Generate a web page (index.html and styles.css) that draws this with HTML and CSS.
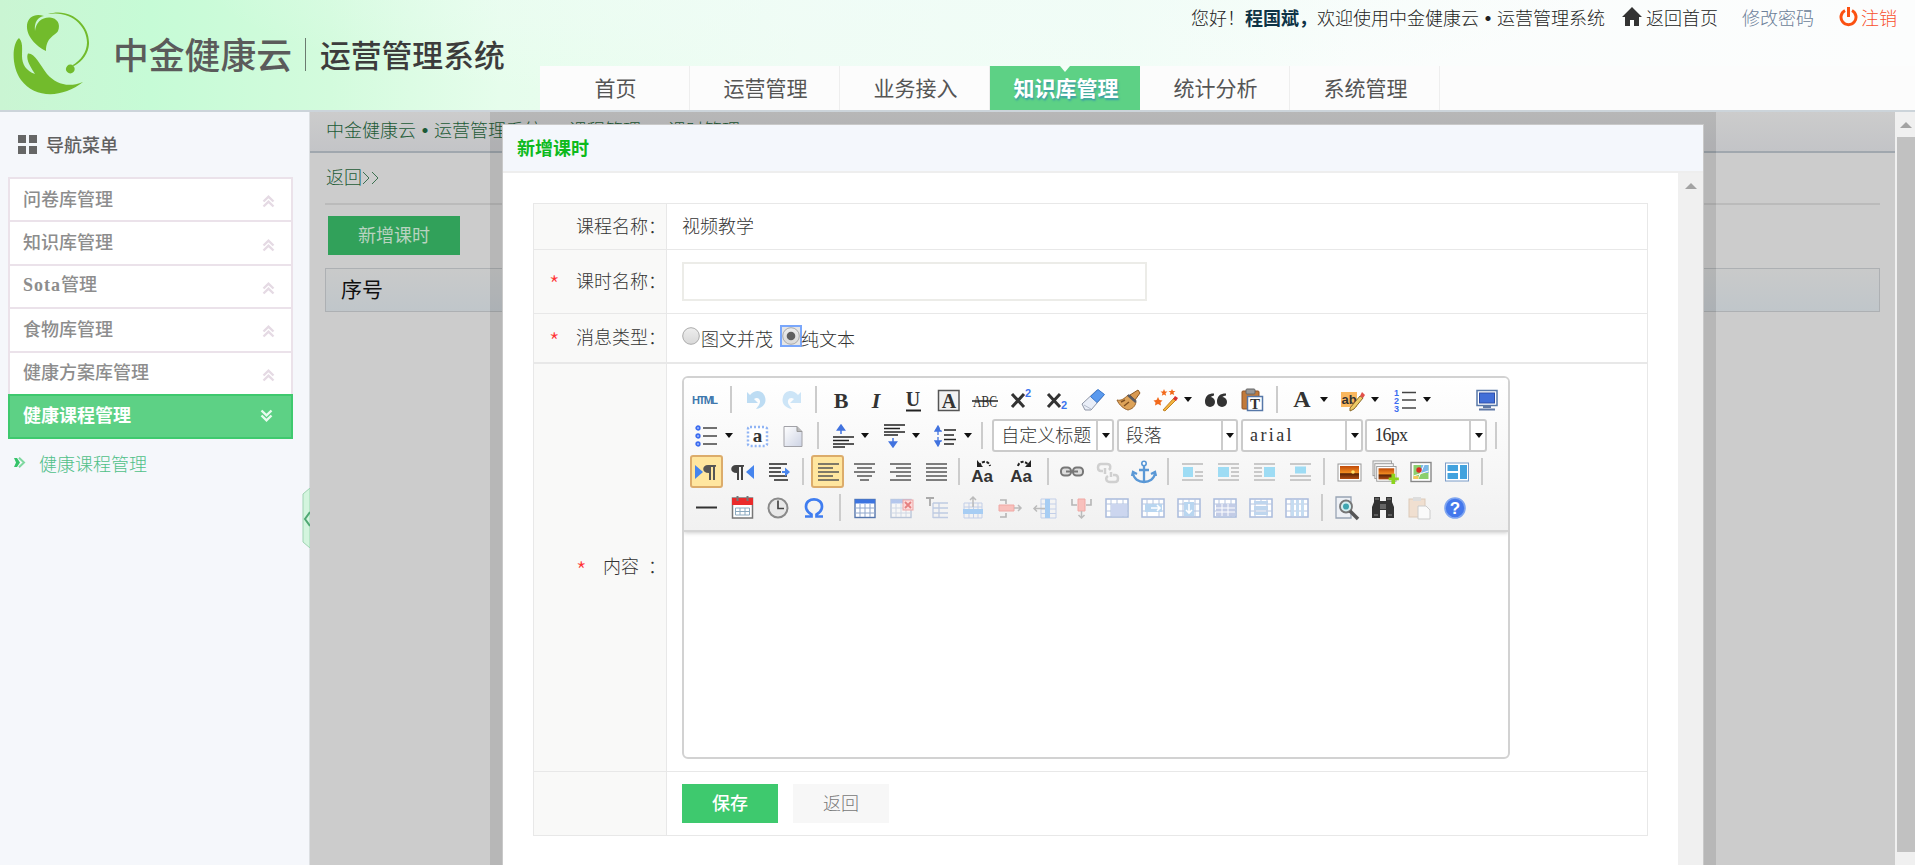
FILE: index.html
```html
<!DOCTYPE html>
<html lang="zh-CN">
<head>
<meta charset="utf-8">
<title>中金健康云•运营管理系统</title>
<link rel="stylesheet" href="styles.css">
</head>
<body>
<svg class="defs" width="0" height="0">
  <defs>
    <linearGradient id="g-paper" x1="0" y1="0" x2="1" y2="1"><stop offset="0" stop-color="#fff"/><stop offset="1" stop-color="#cdd3e4"/></linearGradient>
    <linearGradient id="g-sun" x1="0" y1="0" x2="0" y2="1"><stop offset="0" stop-color="#c04a08"/><stop offset=".5" stop-color="#f08a20"/><stop offset=".6" stop-color="#5a2408"/><stop offset="1" stop-color="#b34c10"/></linearGradient>
    <linearGradient id="g-radio" x1="0" y1="0" x2="0" y2="1"><stop offset="0" stop-color="#eee"/><stop offset="1" stop-color="#d8d8d8"/></linearGradient>
    <symbol id="i-lines" viewBox="0 0 24 24"><path d="M2 4h21M2 8h15M2 12h21M2 16h15M2 20h21" stroke="#555" stroke-width="1.700"/></symbol>
    <symbol id="i-float" viewBox="0 0 24 24"><path d="M2 4h21M2 20h21M15 12h8M15 16h8" stroke="#bbb" stroke-width="1.500"/><rect x="3" y="7" width="10" height="10" fill="#9edcf4"/></symbol>
    <symbol id="i-table" viewBox="0 0 24 24"><rect x="2" y="3.500" width="20" height="18" fill="#fff" stroke="#5576ad" stroke-width="1.400"/><path d="M2 3.500h20v4H2z" fill="#3c74e0"/><path d="M2 12h20M2 17h20M7 8v13M12 8v13M17 8v13" stroke="#8fa6cc"/></symbol>
    <symbol id="i-cells" viewBox="0 0 24 24"><rect x="1" y="3" width="22" height="18" fill="#fff" stroke="#a9bbdc" stroke-width="1.500"/><path d="M1 8h22M1 15h22M6 3v18M18 3v18M12 3v5" stroke="#b4c4e0"/></symbol>
    <symbol id="i-chevrons" viewBox="0 0 12 13"><path d="M1 6.500l5-4.800 5 4.800M1 11.500l5-4.800 5 4.800" fill="none" stroke="currentColor" stroke-width="2.400"/></symbol>
  </defs>
</svg>

<header class="header">
  <div class="brand">
    <svg class="brand-mark" viewBox="12 10 80 90"><g fill="#72bb2c"><path d="M46 51C36 46 26 36 27 25 28 16 36 13 44 16c-6 1-10 6-9 15 1-9 7-14 15-13.500 7 .500 11 6.500 8 13.500-3 5-12 6-12 20z"/><path d="M19 38C12 44 11 66 21 80c14 19 42 18 62 2-15 6-27 2-36-8-7-9-12-21-19-20.500-3 6 4 16 7 20.500-9-3-13-10-13-18 0-8 1-14-3-18z"/><circle cx="70.300" cy="69" r="4.400"/><path d="M48 14C71 7 90 25 89 44c-.500 9-6 17-15 22l-2-.500c9-5 15-14 15-23C87 26 71 10 48 14z"/></g></svg>
    <span class="brand-name">中金健康云</span><span class="brand-line"></span><span class="brand-sub">运营管理系统</span>
  </div>
  <div class="header-right">
    <div class="userbar">
      <span>您好！<b>程国斌，</b>欢迎使用中金健康云<i class="dot">•</i>运营管理系统</span>
      <a class="u-home"><svg width="20" height="20" viewBox="0 0 20 20"><path d="M10 0l10 10h-3v9h-5v-6H8v6H3v-9H0z" fill="#333"/></svg>返回首页</a>
      <a class="u-pass">修改密码</a>
      <a class="u-out"><svg width="19" height="20" viewBox="0 0 19 20"><path d="M6 3.500a7.500 7.500 0 1 0 7 0" fill="none" stroke="#fb5112" stroke-width="3"/><path d="M9.500 0v10" stroke="#fb5112" stroke-width="3"/></svg>注销</a>
    </div>
    <nav class="nav">
      <a>首页</a><a>运营管理</a><a>业务接入</a><a class="on">知识库管理</a><a>统计分析</a><a>系统管理</a>
    </nav>
  </div>
</header>

<div class="body">
  <aside class="side">
    <h2 class="side-title"><span class="grid4"><i></i><i></i><i></i><i></i></span>导航菜单</h2>
    <ul class="menu">
      <li>问卷库管理<svg><use href="#i-chevrons"/></svg></li>
      <li>知识库管理<svg><use href="#i-chevrons"/></svg></li>
      <li><span><span class="latin">Sota</span>管理</span><svg><use href="#i-chevrons"/></svg></li>
      <li>食物库管理<svg><use href="#i-chevrons"/></svg></li>
      <li>健康方案库管理<svg><use href="#i-chevrons"/></svg></li>
      <li class="on">健康课程管理<svg><use href="#i-chevrons"/></svg></li>
    </ul>
    <a class="sub"><svg width="12" height="11" viewBox="0 0 12 11"><path d="M0 1h3l3 4.500L3 10H0l2-4.500z" fill="#36c46a"/><path d="M5 .800l5 4.700-5 4.700" fill="none" stroke="#7fd8a0" stroke-width="2"/></svg>健康课程管理</a>
    <svg class="handle" viewBox="0 0 8 60"><path d="M8 0L1 6v48l7 6z" fill="#d3f5de" stroke="#9fd3b2"/><path d="M8 24l-5 7 5 7" fill="none" stroke="#4fa874" stroke-width="2"/></svg>
  </aside>
  <main class="main">
    <div class="crumbs"><span>中金健康云<i class="dot">•</i>运营管理系统</span><span class="gt">&gt;</span><span>课程管理</span><span class="gt">&gt;</span><span>课时管理</span></div>
    <div class="page">
      <div class="back">返回<svg width="18" height="14" viewBox="0 0 18 14"><path d="M1 1l6 6-6 6M10 1l6 6-6 6" fill="none" stroke="#3c7050"/></svg></div>
      <a class="add">新增课时</a>
      <div class="thead">序号</div>
    </div>
  </main>
  <div class="vbar"><i class="tri"></i><div class="thumb"></div></div>

  <section class="dialog">
    <div class="dialog-box">
    <h3 class="dialog-title">新增课时</h3>
    <div class="dialog-body">
      <div class="form">
        <div class="row r1"><div class="lab"><em></em>课程名称：</div><div class="val">视频教学</div></div>
        <div class="row r2"><div class="lab"><em>*</em>课时名称：</div><div class="val"><input class="text" type="text"></div></div>
        <div class="row r3"><div class="lab"><em>*</em>消息类型：</div><div class="val radios">
          <svg class="radio" viewBox="0 0 18 18"><circle cx="9" cy="9" r="8.300" fill="url(#g-radio)" stroke="#aaa"/></svg><span>图文并茂</span>
          <svg class="radio sel" viewBox="0 0 18 18"><circle cx="9" cy="9" r="8.300" fill="url(#g-radio)" stroke="#aaa"/><circle cx="9" cy="9" r="4.300" fill="#606060"/></svg><span>纯文本</span></div></div>
        <div class="row r4"><div class="lab content-lab"><em>*</em>内容<span>：</span></div><div class="val">
          <div class="editor">
            <div class="tools">
              <div class="trow">
                <span class="b"><svg viewBox="0 0 28 24" class="w28"><text x="13" y="16" text-anchor="middle" textLength="26" class="t-html">HTML</text></svg></span>
                <i class="sep"></i>
                <span class="b"><svg viewBox="0 0 24 24"><path d="M3 4v11h11l-4-4c4-3 8 1 5 6l-3 4c7-1 11-6 9-12-2-7-10-8-15-2z" fill="#bddcf3"/></svg></span>
                <span class="b"><svg viewBox="0 0 24 24"><path d="M21 4v11H10l4-4c-4-3-8 1-5 6l3 4C5 20 1 15 3 9c2-7 10-8 15-2z" fill="#cde5f7"/></svg></span>
                <i class="sep"></i>
                <span class="b"><svg viewBox="0 0 24 24"><text x="12" y="20" text-anchor="middle" class="t-b">B</text></svg></span>
                <span class="b"><svg viewBox="0 0 24 24"><text x="11" y="20" text-anchor="middle" class="t-b t-i">I</text></svg></span>
                <span class="b"><svg viewBox="0 0 24 24"><text x="12" y="18" text-anchor="middle" class="t-u t-lt">U</text><path d="M5 22.500h15" stroke="#222" stroke-width="1.800"/></svg></span>
                <span class="b"><svg viewBox="0 0 24 24"><rect x="1.500" y="2.500" width="20.500" height="20" fill="#f2f2f2" stroke="#555" stroke-width="1.500"/><text x="12" y="19.500" text-anchor="middle" class="t-u">A</text></svg></span>
                <span class="b"><svg viewBox="0 0 26 24" class="w28"><text x="13" y="18.500" text-anchor="middle" textLength="24" lengthAdjust="spacingAndGlyphs" class="t-abc">ABC</text><path d="M0 13h26" stroke="#222" stroke-width="1.700"/></svg></span>
                <span class="b"><svg viewBox="0 0 24 24"><path d="M3 6l12 13M15 6L3 19" stroke="#333" stroke-width="3"/><text x="16" y="9" class="t-n">2</text></svg></span>
                <span class="b"><svg viewBox="0 0 24 24"><path d="M3 6l12 13M15 6L3 19" stroke="#333" stroke-width="3"/><text x="16" y="21" class="t-n">2</text></svg></span>
                <span class="b"><svg viewBox="0 0 24 24"><path d="M1 16L16 2l7 5L10 22H4z" fill="#e9eef8" stroke="#8d94a5"/><path d="M17 1.500l6.500 5-7.500 8-6.500-6z" fill="#5b9aee" stroke="#3b78cc"/><path d="M3 17l7 4" stroke="#b5bccb"/></svg></span>
                <span class="b"><svg viewBox="0 0 24 24"><path d="M13 7l8-5 2 3-5 7z" fill="#d99a52" stroke="#8e5a22"/><path d="M0 12c4 1 7-1 11-5l8 7c-1 5-4 7-8 8C7 21 2 17 0 12z" fill="#dda359" stroke="#98622a"/><path d="M11 7l8 7" stroke="#5a5a60" stroke-width="2.500"/><path d="M4 14l4-2M7 18l5-4" stroke="#805020" stroke-width="1.500"/></svg></span>
                <span class="b dd"><svg viewBox="0 0 24 24"><path d="M10 22L21 10l2 2-11 11z" fill="#f4b440" stroke="#c38422"/><path d="M20 11l3 2 2-3-3-2z" fill="#d83030"/><g fill="#f26a1c"><path d="M5 9l1.500 3 3 .500-2 2 .500 3L5 16l-3 1.500.500-3-2-2 3-.500z"/><path d="M11 1l1 2.500 2.500 0-2 1.700.700 2.600L11 6.500 8.800 7.800l.700-2.600-2-1.700 2.500 0z"/><path d="M19 1l1 2 2.500 0-2 1.600.700 2.400L19 6l-2.200 1 .700-2.400-2-1.600 2.500 0z"/></g></svg></span>
                <span class="b"><svg viewBox="0 0 24 24"><g fill="#333"><circle cx="6" cy="14" r="5"/><path d="M1 14C1 8 4 5.500 10 5.500v2C7 8 5 10 5 12z"/><circle cx="18" cy="14" r="5"/><path d="M13 14c0-6 3-8.500 9-8.500v2c-3 .500-5 2-5 4.500z"/></g></svg></span>
                <span class="b"><svg viewBox="0 0 24 24"><rect x="2" y="3" width="17" height="18" rx="1" fill="#c27a3a" stroke="#8f5426"/><rect x="6" y="1" width="9" height="5" rx="1" fill="#999" stroke="#666"/><rect x="7.500" y="8.500" width="15" height="14" fill="#fff" stroke="#5677a8" stroke-width="1.500"/><text x="15" y="21" text-anchor="middle" class="t-t">T</text></svg></span>
                <i class="sep"></i>
                <span class="b dd"><svg viewBox="0 0 24 24"><text x="12" y="19" text-anchor="middle" class="t-a">A</text></svg></span>
                <span class="b dd"><svg viewBox="0 0 24 24"><rect x="0" y="4" width="16" height="15" fill="#f9b75e"/><text x="8" y="16" text-anchor="middle" class="t-ab">ab</text><path d="M9 20L19 8l3 2-9 11-4 2z" fill="#eecb67" stroke="#8a6a2a"/><path d="M19 8l3 2 2-3-3-3z" fill="#e2504a"/></svg></span>
                <span class="b dd"><svg viewBox="0 0 24 24"><path d="M10 4.500h14M10 12h14M10 20h14" stroke="#444" stroke-width="1.600"/><g class="t-l"><text x="2" y="7.500">1</text><text x="2" y="15.500">2</text><text x="2" y="23.500">3</text></g></svg></span>
                <span class="b end"><svg viewBox="0 0 24 24"><rect x="2" y="2.500" width="20" height="15" fill="#fff" stroke="#5878a8" stroke-width="1.500"/><rect x="4.500" y="5" width="15" height="10" fill="#426fd8" stroke="#2c4ea8"/><path d="M8 19h8M4 21.500h16" stroke="#6079a5" stroke-width="2"/></svg></span>
              </div>
              <div class="trow">
                <span class="b dd"><svg viewBox="0 0 24 24"><path d="M9 4h14M9 12h14M9 20h14" stroke="#444" stroke-width="1.600"/><g fill="#fff" stroke="#3c6cf0" stroke-width="1.900"><circle cx="4" cy="4" r="1.700"/><circle cx="4" cy="12" r="1.700"/><circle cx="4" cy="20" r="1.700"/></g></svg></span>
                <span class="b"><svg viewBox="0 0 24 24"><rect x="3" y="3" width="19" height="19" rx="2" fill="#fff" stroke="#90b4f4" stroke-width="2.500" stroke-dasharray="2 2"/><text x="12.500" y="17.500" text-anchor="middle" class="t-sa">a</text></svg></span>
                <span class="b"><svg viewBox="0 0 24 24"><path d="M3 2.500h13l5 5v15H3z" fill="url(#g-paper)" stroke="#a2a2a8"/><path d="M16 2.500v5h5" fill="#bbb" stroke="#999"/></svg></span>
                <i class="sep"></i>
                <span class="b dd"><svg viewBox="0 0 24 24"><path d="M2 13h21M2 16.500h16M2 20h21M2 23h12" stroke="#222" stroke-width="1.500"/><path d="M10 10V2M6.500 6L10 1l3.500 5z" stroke="#4273df" stroke-width="1.500" fill="#4273df"/></svg></span>
                <span class="b dd"><svg viewBox="0 0 24 24"><path d="M2 1h21M2 4.500h16M2 8h21M2 11h14" stroke="#222" stroke-width="1.500"/><path d="M11 14v8M7.500 18l3.500 5 3.500-5z" stroke="#4273df" stroke-width="1.500" fill="#4273df"/></svg></span>
                <span class="b dd"><svg viewBox="0 0 24 24"><path d="M11 6h12M11 11h10M11 15.500h12M11 20h10" stroke="#222" stroke-width="1.600"/><path d="M5 2v20M2 7l3-5 3 5zM2 17l3 5 3-5z" stroke="#4273df" stroke-width="1.300" fill="#4273df" stroke-dasharray="9 2"/></svg></span>
                <i class="sep s8"></i>
                <span class="combo cn">自定义标题</span><span class="combo cn">段落</span><span class="combo wide">arial</span><span class="combo">16px</span>
                <i class="sep s14"></i>
              </div>
              <div class="trow">
                <span class="b act"><svg viewBox="0 0 24 24"><path d="M1 5l8 7-8 7z" fill="#4685ee"/><path d="M14 5h8v1.800h-1V20h-2V7h-2v13h-2v-7c-8 0-7-8-1-8z" fill="#555"/></svg></span>
                <span class="b"><svg viewBox="0 0 24 24"><path d="M24 5l-8 7 8 7z" fill="#4685ee"/><path d="M6 5h8v1.800h-1V20h-2V7H9v13H7v-7c-8 0-7-8-1-8z" fill="#444"/></svg></span>
                <span class="b"><svg viewBox="0 0 24 24"><path d="M3 4h18M3 8h12M3 12h12M3 16h18M8 20h14" stroke="#222" stroke-width="1.700"/><path d="M16 11h3V7.500l5 4.500-5 4.500V13h-3z" fill="#4a86ee"/></svg></span>
                <i class="sep"></i>
                <span class="b act"><svg viewBox="0 0 24 24"><use href="#i-lines"/></svg></span>
                <span class="b"><svg viewBox="0 0 24 24"><path d="M2 4h21M5 8h15M2 12h21M5 16h15M8 20h9" stroke="#555" stroke-width="1.700"/></svg></span>
                <span class="b"><svg viewBox="0 0 24 24"><path d="M2 4h21M8 8h15M2 12h21M8 16h15M2 20h21" stroke="#555" stroke-width="1.700"/></svg></span>
                <span class="b"><svg viewBox="0 0 24 24"><path d="M2 4h21M2 8h21M2 12h21M2 16h21M2 20h21" stroke="#555" stroke-width="1.700"/></svg></span>
                <i class="sep s10"></i>
                <span class="b w39"><svg viewBox="0 0 24 24"><text x="11" y="21.500" text-anchor="middle" class="t-aa">Aa</text><path d="M8 6c3-6 10-5 11 0" fill="none" stroke="#222" stroke-width="2" stroke-dasharray="3 1.500"/><path d="M6 0v7h6z" fill="#222"/></svg></span>
                <span class="b w39"><svg viewBox="0 0 24 24"><text x="11" y="21.500" text-anchor="middle" class="t-aa">Aa</text><path d="M8 6c1-5 8-6 11 0" fill="none" stroke="#222" stroke-width="2" stroke-dasharray="3 1.500"/><path d="M21 0v7h-6z" fill="#222"/></svg></span>
                <i class="sep s12"></i>
                <span class="b"><svg viewBox="0 0 24 24"><rect x="1" y="7.500" width="10" height="8" rx="3.500" fill="#ddd" stroke="#777" stroke-width="2"/><rect x="13" y="7.500" width="10" height="8" rx="3.500" fill="#ddd" stroke="#777" stroke-width="2"/><path d="M6 11.500h12" stroke="#777" stroke-width="2"/></svg></span>
                <span class="b"><svg viewBox="0 0 24 24"><path d="M7 11H5C1 11 1 4 5 4h6c4 0 4 4 2 6M17 15h2c4 0 4 7 0 7h-5c-4 0-5-4-2-6M9 8v6M15 12v5" fill="none" stroke="#d0d0d0" stroke-width="2.500"/></svg></span>
                <span class="b"><svg viewBox="0 0 24 24"><path d="M12 6v16M7 10h10M1 13c1 12 21 12 22 0M0 16l1-4 4 2M24 16l-1-4-4 2" fill="none" stroke="#5a98d6" stroke-width="2.300"/><circle cx="12" cy="3.500" r="2.200" fill="#fff" stroke="#5a98d6" stroke-width="1.600"/></svg></span>
                <i class="sep s12"></i>
                <span class="b"><svg viewBox="0 0 24 24"><use href="#i-float"/></svg></span>
                <span class="b"><svg viewBox="0 0 24 24"><path d="M2 4h21M2 20h21M15 8h8M15 12h8M15 16h8" stroke="#bbb" stroke-width="1.500"/><rect x="2" y="7" width="11" height="10" fill="#9edcf4"/></svg></span>
                <span class="b"><svg viewBox="0 0 24 24"><path d="M2 4h21M2 20h21M2 8h8M2 12h8M2 16h8" stroke="#bbb" stroke-width="1.500"/><rect x="12" y="7" width="11" height="10" fill="#9edcf4"/></svg></span>
                <span class="b"><svg viewBox="0 0 24 24"><path d="M2 4h21M2 16h21M2 20h21" stroke="#bbb" stroke-width="1.500"/><rect x="7" y="6.500" width="11" height="7" fill="#9edcf4"/></svg></span>
                <i class="sep"></i>
                <span class="b"><svg viewBox="0 0 24 24"><rect x="1" y="4" width="23" height="17" fill="#fff" stroke="#999"/><rect x="3" y="6" width="19" height="13" fill="url(#g-sun)"/><circle cx="16" cy="12" r="1.800" fill="#ffe06a"/></svg></span>
                <span class="b"><svg viewBox="0 0 28 26" class="w28"><rect x="1" y="1" width="20" height="16" fill="#eee" stroke="#999"/><rect x="3" y="4" width="20" height="16" fill="#f7f7f7" stroke="#999"/><rect x="5" y="7" width="21" height="16" fill="#fff" stroke="#999"/><rect x="7" y="9" width="17" height="12" fill="url(#g-sun)"/><path d="M21 15h4v4h4v3h-4v4h-4v-4h-3v-3h3z" fill="#8bd41d"/></svg></span>
                <span class="b"><svg viewBox="0 0 24 24"><rect x="2" y="2.500" width="20" height="19" fill="#fff" stroke="#888" stroke-width="1.400"/><rect x="4.500" y="5" width="15" height="14" fill="#8bcf6e"/><path d="M12 5h7.500v8H12z" fill="#7bb7e8"/><path d="M4.500 16l15-5M9 19l6-14" stroke="#fff"/><path d="M4.500 16h5v3h-5z" fill="#f3c85c"/><circle cx="10" cy="10" r="2.700" fill="#d92b22"/></svg></span>
                <span class="b"><svg viewBox="0 0 24 24"><rect x=".500" y="3" width="23" height="18" fill="#fff" stroke="#7b9cc8"/><path d="M2.500 5H13v6H2.500zM2.500 13H13v6H2.500zM15 5h7v14h-7z" fill="#42a2de"/></svg></span>
                <i class="sep"></i>
              </div>
              <div class="trow">
                <span class="b"><svg viewBox="0 0 24 24"><path d="M2 11.500h21" stroke="#333" stroke-width="2"/></svg></span>
                <span class="b"><svg viewBox="0 0 24 24"><rect x="2.500" y="2" width="20" height="20" fill="#fff" stroke="#777" stroke-width="1.500"/><path d="M2 2h21v7H2z" fill="#ea2b2b"/><path d="M7.500 0v5M17.500 0v5" stroke="#777" stroke-width="2"/><path d="M5.500 12h14v7h-14zM5.500 15.500h14M10 12v7M15 12v7" fill="none" stroke="#8caac0"/></svg></span>
                <span class="b"><svg viewBox="0 0 24 24"><circle cx="12" cy="12" r="9.500" fill="#e8e8e8" stroke="#8a8a8a" stroke-width="2"/><path d="M12 4.500v8h6" fill="none" stroke="#444" stroke-width="1.700"/></svg></span>
                <span class="b"><svg viewBox="0 0 24 24"><path d="M3 20.500h6.500v-2C5 16 4 13 4 10.500 4 1 20 1 20 10.500c0 2.500-1 5.500-5.500 8v2H21" fill="none" stroke="#3f7df0" stroke-width="2.700"/></svg></span>
                <i class="sep s15"></i>
                <span class="b"><svg viewBox="0 0 24 24"><use href="#i-table"/></svg></span>
                <span class="b"><svg viewBox="0 0 24 24"><g opacity=".35"><use href="#i-table"/></g><rect x="14" y="4" width="10" height="10" fill="#fbdada" stroke="#efa5a5"/><path d="M16 6l6 6M22 6l-6 6" stroke="#e58080" stroke-width="1.800"/></svg></span>
                <span class="b"><svg viewBox="0 0 24 24"><path d="M1 2h8M5 2v8" stroke="#aaa" stroke-width="1.800"/><path d="M8 7h15M8 7v15M8 12h15M8 17h15M8 21.500h15M14 7v15" stroke="#bfcbe2" stroke-width="1.300" fill="none"/></svg></span>
                <span class="b"><svg viewBox="0 0 24 24"><path d="M3 7h18v15H3zM3 11h18M8 7v15M12.500 7v15M17 7v15" fill="none" stroke="#c3cfe8"/><path d="M2 13h20v5H2z" fill="#a7cdf3"/><path d="M12 11V1M9 4l3-3 3 3" fill="none" stroke="#bbb" stroke-width="1.500"/></svg></span>
                <span class="b"><svg viewBox="0 0 24 24"><path d="M3 4h6v4M3 21h6v-4" fill="none" stroke="#b5b5b5" stroke-width="1.600"/><path d="M2 9h15v6H2z" fill="#f8c0bc" stroke="#f0a8a4"/><path d="M17 12h7M21 9l3 3-3 3" fill="none" stroke="#bbb" stroke-width="1.500"/></svg></span>
                <span class="b"><svg viewBox="0 0 24 24"><path d="M8 3h15v19H8zM8 8h15M8 13h15M8 17.500h15" fill="none" stroke="#c3cfe8"/><path d="M12 3h5v19h-5z" fill="#a7cdf3"/><path d="M12 12.500H1M4 9.500l-3 3 3 3" fill="none" stroke="#bbb" stroke-width="1.500"/></svg></span>
                <span class="b"><svg viewBox="0 0 24 24"><path d="M3 3v6h5M22 3v6h-5" fill="none" stroke="#b5b5b5" stroke-width="1.600"/><path d="M9 3h7v12H9z" fill="#f8c0bc" stroke="#f0a8a4"/><path d="M12.500 15v7M9.500 19l3 3 3-3" fill="none" stroke="#bbb" stroke-width="1.500"/></svg></span>
                <span class="b"><svg viewBox="0 0 24 24"><use href="#i-cells"/><path d="M6 8h16v12H6z" fill="#ccd6ef"/></svg></span>
                <span class="b"><svg viewBox="0 0 24 24"><use href="#i-cells"/><path d="M4 8h17v8H4z" fill="#b9d6f0"/><path d="M10 12h9M16 9l3 3-3 3" fill="none" stroke="#fff" stroke-width="1.600"/></svg></span>
                <span class="b"><svg viewBox="0 0 24 24"><use href="#i-cells"/><path d="M7 6h10v14H7z" fill="#b9d6f0"/><path d="M12 8v9M9 14l3 3 3-3" fill="none" stroke="#fff" stroke-width="1.600"/></svg></span>
                <span class="b"><svg viewBox="0 0 24 24"><use href="#i-cells"/><path d="M3 8h19v12H3z" fill="#c3cce6"/><path d="M3 12h19M3 16h19M9 8v12M15 8v12" stroke="#fff"/></svg></span>
                <span class="b"><svg viewBox="0 0 24 24"><use href="#i-cells"/><path d="M5 5h14v3H5zM5 10h14v4H5zM5 16h14v3H5z" fill="#bfd6ee"/></svg></span>
                <span class="b"><svg viewBox="0 0 24 24"><use href="#i-cells"/><path d="M6 4h3v16H6zM11 4h3v16h-3zM16 4h3v16h-3z" fill="#c5dcf1"/></svg></span>
                <i class="sep"></i>
                <span class="b"><svg viewBox="0 0 24 24"><path d="M1 1h15v21H1z" fill="#eef1f6" stroke="#98a4b4" stroke-width="1.300"/><circle cx="11" cy="10.500" r="6" fill="#d5eef0" stroke="#777" stroke-width="1.800"/><circle cx="11" cy="10.500" r="3" fill="#3fa5b0"/><path d="M15 15l8 8" stroke="#555" stroke-width="3.500"/></svg></span>
                <span class="b"><svg viewBox="0 0 24 24"><path d="M3 1h6v4h6V1h6v5l2 5v11h-8v-8H9v8H1V11l2-5z" fill="#333"/><path d="M9 8h6v5H9z" fill="#666"/><path d="M3 19h4M17 19h4M4 3h4M16 3h4" stroke="#888"/></svg></span>
                <span class="b"><svg viewBox="0 0 24 24"><rect x="2" y="3" width="16" height="18" fill="#f0dfd0" stroke="#dcc9b8"/><rect x="6" y="1" width="8" height="4" fill="#ddd"/><path d="M11 10h8l4 4v9H11z" fill="#fafafa" stroke="#ccc"/></svg></span>
                <span class="b"><svg viewBox="0 0 24 24"><circle cx="12" cy="12" r="10" fill="#4478ec" stroke="#7fa5f0" stroke-width="1.600"/><text x="12" y="18" text-anchor="middle" class="t-q">?</text></svg></span>
              </div>
            </div>
            <div class="canvas"></div>
          </div>
        </div></div>
        <div class="row r5"><div class="lab"></div><div class="val btns"><a class="save">保存</a><a class="ret">返回</a></div></div>
      </div>
      <div class="ibar"><i class="tri"></i></div>
    </div>
    </div>
  </section>
</div>
</body>
</html>
```

FILE: styles.css
```css
* { box-sizing: border-box; }
body { margin: 0; width: 1915px; height: 865px; overflow: hidden; font: 300 18px/24px "Noto Sans CJK SC", sans-serif; color: #333; background: #fff; }
i, em { font-style: normal; }
ul, h2, h3 { margin: 0; padding: 0; list-style: none; }
.defs { position: absolute; }
.latin { font-family: "Liberation Serif", serif; letter-spacing: 1px; font-weight: 700; }
.dot { display: inline-block; width: 18px; text-align: center; font-weight: 900; }

.header { display: flex; height: 112px; border-bottom: 2px solid #ccd4da; background: radial-gradient(ellipse 700px 130px at 900px -20px, rgba(240,252,247,.8), rgba(240,252,247,0)), linear-gradient(90deg, #caf5d3 0, #c6fbd6 150px, #d3fbdd 330px, #e6fdec 500px, #effcf4 800px, #f1fdf6 1100px, #fafdfc 1350px, #fcfdfd 1915px); }
.brand { display: flex; align-items: center; width: 540px; height: 110px; padding-left: 12px; }
.brand-mark { width: 80px; height: 90px; margin-right: 21px; }
.brand-name { margin-top: -4px; font-size: 35.800px; line-height: 40px; font-weight: 500; color: #5b5b5b; white-space: nowrap; }
.brand-line { width: 1px; height: 33px; margin: -2px 14px 0 13px; background: #6b7a70; }
.brand-sub { margin-top: -2px; font-size: 30.800px; line-height: 36px; font-weight: 500; color: #3c3c3c; white-space: nowrap; }
.header-right { flex: 1; display: flex; flex-direction: column; }
.userbar { display: flex; align-items: center; height: 66px; padding: 0 0 31px 651px; white-space: nowrap; color: #222; }
.userbar b { font-weight: 700; color: #0e3346; }
.userbar a { display: flex; align-items: center; gap: 4px; }
.u-home { margin-left: 17px; }
.u-pass { margin-left: 24px; color: #6c7f99; }
.userbar .u-out { margin-left: 25px; gap: 3px; color: #f8502c; }
.nav { display: flex; height: 45px; position: relative; background: #fcfcfc; }
.nav a { width: 150px; padding-left: 2px; border-right: 1px solid #eee; text-align: center; font-size: 21px; line-height: 42px; font-weight: 400; color: #555; }
.nav .on { position: relative; border: 0; background: #5dd185; color: #fff; font-weight: 700; text-shadow: 1px 2px 2px #3a9aa8; }
.nav .on::before { content: ""; position: absolute; left: 70px; top: 0; border: 5px solid transparent; border-top: 6px solid #f4fdf8; }

.body { position: relative; display: flex; height: 753px; }
.side { position: relative; width: 310px; padding: 20px 16px 0 8px; background: #f5f7fb; border-right: 1px solid #dcdfe2; }
.side-title { display: flex; align-items: center; gap: 9px; height: 24px; padding-left: 10px; font-size: 18px; line-height: 22px; font-weight: 500; color: #606060; margin-bottom: 21px; }
.grid4 { display: grid; grid-template-columns: 8px 8px; gap: 3px; padding-top: 1px; }
.grid4 i { height: 8px; background: #666; }
.menu li { display: flex; align-items: center; justify-content: space-between; height: 43.400px; padding: 0 16px 4px 13px; border: 2px solid #ebe2ea; border-bottom: 0; background: #fff; color: #8d8d8d; font-weight: 500; }
.menu svg { width: 13px; height: 13px; margin-top: 8px; color: #e5dae4; }
.menu .on { height: 45px; border: 2px solid #3ec96e; background: #5dd185; color: #fff; font-weight: 700; }
.menu .on svg { margin: 2px 2px 0 0; color: #e8fbef; transform: rotate(180deg); }
.sub { display: flex; align-items: center; gap: 13px; margin-top: 12px; padding-left: 6px; color: #4fc088; }
.handle { position: absolute; right: -1px; top: 376px; width: 8px; height: 60px; }

.main { width: 1585px; background: #ccc; }
.crumbs { display: flex; height: 41px; padding: 5px 0 0 16px; border-bottom: 2px solid #a0a7ae; background: linear-gradient(#cccccc, #c3c4c7); color: #1c5a36; white-space: nowrap; }
.gt { width: 27px; text-align: center; }
.page { padding: 0 15px; }
.back { display: flex; align-items: center; height: 52px; padding: 0 1px 4px; border-bottom: 2px solid #bbb; color: #1f5c38; }
.back svg { margin-top: 3px; }
.add { display: block; width: 132px; height: 39px; margin: 11px 0 13px 3px; background: #31a15a; color: #b9d3c0; text-align: center; line-height: 36px; font-weight: 400; }
.thead { height: 44px; padding-left: 15px; border: 1px solid #adb0b3; background: linear-gradient(#c9caca, #c0c6ca); font-size: 21px; line-height: 38px; font-weight: 400; color: #111; }
.vbar { width: 20px; padding: 10px 0 0 2px; background: #f0f0f0; }
.tri { display: block; width: 0; margin: 0 auto; border: 6px solid transparent; border-top: 0; border-bottom-color: #a3a3a3; }
.thumb { height: 715px; margin-top: 9px; background: #c1c1c1; }

.dialog { position: absolute; left: 490px; top: 0; width: 1226px; height: 753px; padding: 12px 12px 0; background: rgba(0,0,0,.1); }
.dialog-box { height: 741px; border: 1px solid #c9c9c9; border-bottom: 0; background: #fff; }
.dialog-title { height: 48px; padding-left: 14px; border-bottom: 2px solid #eee; background: #f4f7fc; color: #0dba1c; font-size: 18px; line-height: 45px; font-weight: 700; }
.dialog-body { display: flex; justify-content: space-between; height: 692px; padding-left: 30px; }
.ibar { width: 25px; padding-top: 10px; background: #f0f0f0; }
.form { width: 1115px; height: 633px; margin-top: 30px; border: 1px solid #e8e8e8; }
.row { display: flex; border-bottom: 1px solid #e8e8e8; }
.row:last-child { border-bottom: 0; }
.lab { display: flex; align-items: center; width: 133px; padding: 0 0 4px 15px; border-right: 1px solid #e8e8e8; background: #f9f9f8; white-space: nowrap; }
.lab em { width: 28px; padding-top: 9px; font-size: 24px; color: #f33; }
.content-lab { padding-left: 42px; padding-bottom: 5px; }
.content-lab span { margin-left: 9px; }
.val { display: flex; align-items: center; padding-left: 15px; }
.r1 { height: 46px; }
.r1 .val { padding-bottom: 4px; }
.r2 { height: 64px; }
.r3 { height: 50px; border-bottom-width: 2px; }
.r3 .val { padding-bottom: 3px; }
.r4 { height: 408px; }
.r5 { height: 63px; }
.text { width: 465px; height: 39px; border: 2px solid #ecece8; background: #fff; }
.radio { width: 18px; height: 18px; margin: -2px 1px 0 0; }
.radio.sel { margin: -2px 0 0 8px; width: 20px; height: 20px; padding: 0 1px; outline: 2px solid #7aa7fb; outline-offset: -1px; background: #e6e6e6; }
.radios span { padding-top: 2px; }
.btns { gap: 15px; }
.btns a { width: 96px; height: 39px; line-height: 36px; text-align: center; }
.btns .save { background: #3ec96e; color: #fff; font-weight: 500; }
.btns .ret { background: #f7f7f7; color: #777; }

.editor { width: 828px; height: 383px; border: 2px solid #d2d2d2; border-radius: 6px; overflow: hidden; background: #fff; }
.tools { height: 154px; padding: 3.500px 4px 0 4px; border-bottom: 2px solid #d5d5d5; background: linear-gradient(#fff, #f1f1f1); box-shadow: 0 1px 4px rgba(0,0,0,.2); }
.trow { display: flex; align-items: center; height: 36px; }
.b { position: relative; flex: none; display: flex; align-items: center; justify-content: center; width: 36px; height: 33px; }
.b svg { width: 24px; height: 24px; overflow: visible; }
.b .w28 { width: 28px; }
.b.w39 { width: 39px; }
.b.dd { width: 51.200px; justify-content: flex-start; padding-left: 6px; }
.b.dd::after { content: ""; margin-left: 6.500px; border: 4px solid transparent; border-top: 5px solid #111; border-bottom: 0; }
.b.act { width: 33px; margin: 0 1.500px; border: 2px solid #dcac6b; border-radius: 3px; background: #ffe69f; }
.b.end { margin-left: auto; margin-right: -1px; }
.sep { flex: none; width: 13.500px; height: 27px; background: linear-gradient(#ccc, #ccc) center / 2px 27px no-repeat; }
.sep.s8 { width: 8px; margin-right: 6px; } .sep.s10 { width: 10px; } .sep.s12 { width: 12px; } .sep.s15 { width: 15px; } .sep.s14 { width: 12px; }
.combo { position: relative; flex: none; width: 121.500px; height: 33px; margin-right: 2.900px; padding-left: 7px; border: 2px solid #cbcbcb; border-radius: 3px; background: linear-gradient(#ccc, #ccc) 102px 0 / 2px 100% no-repeat #fff; font: 400 18px/28px "Liberation Serif", serif; letter-spacing: -.800px; color: #333; }
.combo.wide { letter-spacing: 2.400px; }
.combo.cn { font: 300 18px/26px "Noto Sans CJK SC", sans-serif; letter-spacing: 0; }
.combo::after { content: ""; position: absolute; right: 2px; top: 12px; border: 4px solid transparent; border-top: 5px solid #111; border-bottom: 0; }
.canvas { height: 225px; }

.b text { font-family: "Liberation Serif", serif; font-weight: 700; fill: #333; }
.b .t-html { font: 700 11px "Liberation Sans", sans-serif; fill: #3e78ad; }
.b .t-b { font-size: 22px; }
.b .t-i { font-style: italic; }
.b .t-u { font-size: 20px; }
.b .t-abc { font-size: 16px; font-weight: 400; }
.b .t-n { font: 700 11px "Liberation Sans", sans-serif; fill: #3b74ee; }
.b .t-t { font-size: 15px; }
.b .t-a { font-size: 24px; }
.b .t-ab { font: 700 13px "Liberation Sans", sans-serif; }
.b .t-l text { font: 700 9px "Liberation Sans", sans-serif; fill: #3c6cf0; }
.b .t-sa { font-size: 19px; }
.b .t-aa { font: 700 17px "Liberation Sans", sans-serif; }
.b .t-q { font: 700 17px "Liberation Sans", sans-serif; fill: #fff; }
```
